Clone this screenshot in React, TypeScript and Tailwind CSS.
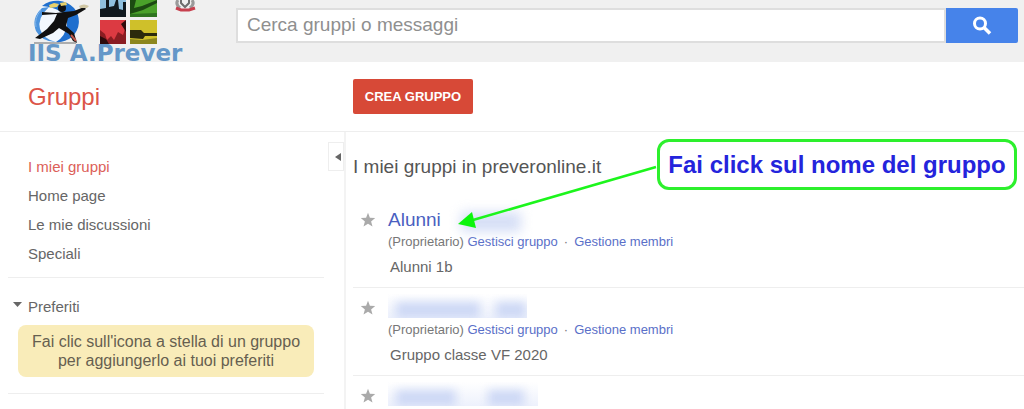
import type { ReactNode } from "react";

const navItems = ["I miei gruppi", "Home page", "Le mie discussioni", "Speciali"];

type Group = {
  id: number;
  name?: string;
  description: string;
  hidden: ReactNode;
};

const groups: Group[] = [
  {
    id: 1,
    name: "Alunni",
    description: "Alunni 1b",
    hidden: <span className="mt-1 ml-5 h-5 w-[60px] bg-[#ccd7f4] opacity-80 blur-[6px]" />,
  },
  {
    id: 2,
    description: "Gruppo classe VF 2020",
    hidden: <HiddenName />,
  },
  {
    id: 3,
    description: "",
    hidden: <HiddenName wide />,
  },
];

function HiddenName({ wide }: { wide?: boolean }) {
  return (
    <span
      className={`-mt-1 flex h-6 items-end overflow-hidden bg-linear-to-b from-white to-[#edf1fc] ${wide ? "w-[150px]" : "w-[139px]"}`}
    >
      <span className={`ml-2 h-4 bg-[#cdd8f5] blur-[5px] ${wide ? "w-[60px]" : "w-[84px]"}`} />
      <span className={`h-4 bg-[#cdd8f5] blur-[5px] ${wide ? "ml-8 w-[36px]" : "ml-4 w-[30px]"}`} />
    </span>
  );
}

function Logo() {
  return (
    <svg viewBox="0 0 172 62" className="h-[62px] w-[172px] overflow-visible" role="img" aria-label="IIS A.Prever">
      {/* globe */}
      <circle cx="28" cy="22" r="21" fill="#f3f8fd" />
      <path d="M14 6a22 20 0 0 1 32 2 21 21 0 0 1-2 29q-8 6-16 5 10-6 11-18Q38 8 14 6z" fill="#1f6fce" />
      <path d="M14 8Q3 18 8 31q6 11 20 11-13-3-16-13-3-11 9-22z" fill="#4c93dd" />
      <path d="M8 27q-2-9 5-17" fill="none" stroke="#7fb3e8" />
      {/* waiter */}
      <circle cx="34" cy="8" r="4" fill="#111" />
      <path d="M14 12l14 1 8-1 10-1 10-4 2 2-10 6-8 3-2 8 8 7 3 10-4-2-4-7-10-6-6 5-13 6-5-1 12-9 7-8 3-7-15 1z" fill="#111" />
      <path d="M21 5l5-2 5 1-2 3-7 1zM32 3l6-1 1 3-6 1z" fill="#e8d06a" />
      <path d="M51 6q5-3 10 0l-2 2h-7z" fill="#cfc6a4" />
      <path d="M6 43h42" stroke="#6a6a6a" />
      <path d="M43 35l5 6" stroke="#c0584d" strokeWidth="2" />
      {/* photos */}
      <path d="M72 0h26v17H72z" fill="#8fc0df" />
      <path d="M72 9l6-1V0h3v7l5-1 2-6h2l1 9 4 1V2h3v15H72z" fill="#10191f" />
      <path d="M102 0h27v17h-27z" fill="#4aa12a" />
      <path d="M102 0h6l-2 8 8-2 15-6v3l-14 7-13 4z" fill="#1c4a12" />
      <path d="M102 14l27-1v4h-27z" fill="#2f7420" />
      <path d="M72 20h26v24H72z" fill="#dc3a42" />
      <path d="M72 30l5 4 2 6 4-4 3 4 4-8 5 3 3-9v18H72z" fill="#8a1d22" />
      <path d="M72 36l6 3 3 5h-9zM93 24l5-4v12z" fill="#2d0b0c" />
      <path d="M102 20h27v24h-27z" fill="#cfc02a" />
      <path d="M102 30h11l3 3h13v3h-12l-2 3-13-1z" fill="#2b2a0c" />
      <path d="M102 39l12 1 15-2v6h-27z" fill="#8c861e" />
      {/* emblem */}
      <path d="M150 0q-3 4 2 8M164 0q3 4-2 8" fill="none" stroke="#9a9a9a" strokeWidth="3" />
      <path d="M153 0v3l4 4 4-4V0" fill="none" stroke="#6e6e6e" strokeWidth="2" />
      <path d="M148 8l5 2h8l6-2" fill="none" stroke="#c7404e" strokeWidth="3" />
      <text x="0" y="61" fontSize="23" fontWeight="700" fontFamily="'DejaVu Sans', sans-serif" fill="#6497c8">
        IIS A.Prever
      </text>
    </svg>
  );
}

function Star() {
  return (
    <svg viewBox="0 0 16 16" className="size-4" fill="#aaa">
      <path d="M8 .8l1.9 4.9 5.3.3-4.1 3.4 1.4 5.2L8 11.7l-4.5 2.9 1.4-5.2L.8 6l5.3-.3z" />
    </svg>
  );
}

function GroupRow({ group }: { group: Group }) {
  return (
    <li className="flex h-[88px] gap-3 border-b border-[#eee] pt-2 pl-[7px]">
      <button aria-label="Aggiungi ai preferiti" className="mt-1 size-4">
        <Star />
      </button>
      <div className="min-w-0 flex-1">
        <div className="flex h-6 items-center text-[19px] text-[#4a5fc1]">
          {group.name && <a href="#gruppo">{group.name}</a>}
          {group.hidden}
        </div>
        {group.description && (
          <>
            <p className="text-[13px] leading-5 whitespace-nowrap text-[#777]">
              (Proprietario){" "}
              <a href="#gestisci" className="text-[#5a6fc8]">Gestisci gruppo</a>
              <span className="px-[6px]">·</span>
              <a href="#membri" className="text-[#5a6fc8]">Gestione membri</a>
            </p>
            <p className="pt-[3px] pl-[2px] text-[15px] leading-6 text-[#666]">{group.description}</p>
          </>
        )}
      </div>
    </li>
  );
}

export default function App() {
  return (
    <div className="h-screen overflow-hidden bg-white font-['Liberation_Sans',Arial,sans-serif]">
      <header className="flex h-[62px] items-start bg-[#f0f0f0] pr-[6px] pl-7">
        <Logo />
        <form className="mt-2 ml-9 flex h-[35px] flex-1">
          <input
            type="text"
            aria-label="Cerca"
            placeholder="Cerca gruppi o messaggi"
            className="min-w-0 flex-1 border-2 border-[#dedede] bg-white px-[9px] text-[19px] text-[#555] placeholder:text-[#8f8f8f]"
          />
          <button type="button" aria-label="Avvia ricerca" className="flex w-[72px] items-center justify-center rounded-r-xs bg-[#4683ea]">
            <svg viewBox="0 0 20 20" className="size-5" fill="none" stroke="#fff">
              <circle cx="8" cy="7.5" r="5.5" strokeWidth="3" />
              <path d="M12 11.5l6 6" strokeWidth="3.5" />
            </svg>
          </button>
        </form>
      </header>

      <div className="flex h-[70px] items-center border-b border-[#eee]">
        <h1 className="w-[353px] pl-7 text-2xl text-[#dc5548]">Gruppi</h1>
        <button className="h-[35px] w-[120px] rounded-xs bg-[#d74937] text-[13px] font-bold text-white">
          CREA GRUPPO
        </button>
      </div>

      <div className="flex">
        <aside className="relative h-[300px] w-[346px] border-r-2 border-[#f3f3f3] pt-5 pl-2">
          <nav className="flex flex-col pl-5 text-[15px] leading-[29px] text-[#666]">
            {navItems.map((item, i) => (
              <a key={item} href="#nav" className={i === 0 ? "text-[#dc6058]" : ""}>
                {item}
              </a>
            ))}
          </nav>
          <button
            aria-label="Comprimi"
            className="absolute top-[10px] right-0 flex h-[29px] w-4 items-center justify-center border border-[#eee] pl-1"
          >
            <svg viewBox="0 0 6 8" className="h-2 w-[6px]" fill="#666">
              <path d="M6 0v8L0 4z" />
            </svg>
          </button>
          <div className="mt-[9px] mr-5 border-y border-[#eee] pt-[14px] pb-4">
            <button className="flex items-center gap-[6px] pl-[5px] text-[15px] leading-[29px] text-[#666]">
              <svg viewBox="0 0 9 6" className="mb-1 h-[6px] w-[9px]" fill="#666">
                <path d="M0 0h9L4.5 5z" />
              </svg>
              Preferiti
            </button>
            <p className="mt-1 mr-[10px] ml-[10px] rounded-lg bg-[#f9ecb9] py-[7px] text-center text-base leading-[19px] text-[#665f50]">
              Fai clic sull'icona a stella di un gruppo
              <br />
              per aggiungerlo ai tuoi preferiti
            </p>
          </div>
        </aside>

        <main className="relative min-w-0 flex-1 pl-[7px]">
          <h2 className="pt-[23px] pb-[21px] text-[19px] leading-6 text-[#555]">I miei gruppi in preveronline.it</h2>
          <ul>
            {groups.map((group) => (
              <GroupRow key={group.id} group={group} />
            ))}
          </ul>

          {/* Annotation */}
          <svg viewBox="0 0 200 68" className="absolute top-[32px] left-[112px] h-[68px] w-[200px]">
            <path d="M15 56L198 3" stroke="#1cf51c" strokeWidth="2.5" />
            <path d="M0 60l14-12 4 16z" fill="#0cf50c" />
          </svg>
          <div className="absolute top-[7px] left-[311px] flex h-[51px] w-[360px] items-center justify-center rounded-xl border-3 border-[#2df02d] bg-white text-2xl font-bold whitespace-nowrap text-[#2424dc]">
            Fai click sul nome del gruppo
          </div>
        </main>
      </div>
    </div>
  );
}
